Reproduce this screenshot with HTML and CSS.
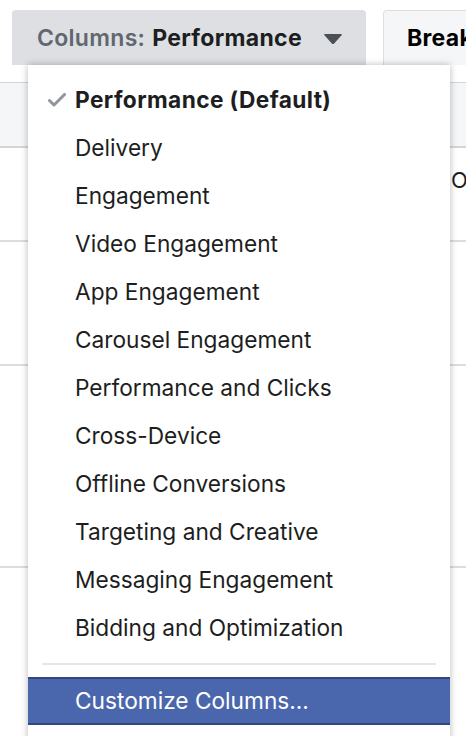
FILE: index.html
```html
<!DOCTYPE html>
<html lang="en">
<head>
    <meta charset="UTF-8">
    <meta name="viewport" content="width=device-width, initial-scale=1.0">
    <link rel="stylesheet" href="styles.css">
    <title>Columns menu</title>
</head>
<body>

<div class="toolbar">
    <button class="columnsButton">
        <span class="label">Columns:</span>
        <span class="value">Performance</span>
        <svg class="caret" width="20" height="12" viewBox="0 0 20 12">
            <path d="M2 1 L18 1 Q19.5 1 18.5 2.3 L11.2 10.4 Q10 11.6 8.8 10.4 L1.5 2.3 Q0.5 1 2 1 Z" fill="#4b4f56"/>
        </svg>
    </button>
    <button class="breakdownButton">Break</button>
</div>

<div class="table">
    <div class="headerRow"></div>
    <div class="row rowOne"><span class="cellText">O</span></div>
    <div class="row rowTwo"></div>
    <div class="row rowThree"></div>
</div>

<!-- Dropdown menu, lies over the table -->
<div class="menu">
    <ul class="menuList">
        <li class="menuItem selected">
            <svg class="check" width="18" height="14" viewBox="0 0 18 14">
                <path d="M1.5 7.5 L6 12 L16.5 1.5" fill="none" stroke="#90949c" stroke-width="3" stroke-linejoin="round" stroke-linecap="round"/>
            </svg>
            Performance (Default)
        </li>
        <li class="menuItem">Delivery</li>
        <li class="menuItem">Engagement</li>
        <li class="menuItem">Video Engagement</li>
        <li class="menuItem">App Engagement</li>
        <li class="menuItem">Carousel Engagement</li>
        <li class="menuItem">Performance and Clicks</li>
        <li class="menuItem">Cross-Device</li>
        <li class="menuItem">Offline Conversions</li>
        <li class="menuItem">Targeting and Creative</li>
        <li class="menuItem">Messaging Engagement</li>
        <li class="menuItem">Bidding and Optimization</li>
    </ul>
    <div class="separator"></div>
    <div class="menuItem highlighted">Customize Columns...</div>
</div>

</body>
</html>
```

FILE: styles.css
```css
body {
    margin: 0;
    background-color: #ffffff;
    font-family: Inter, 'Liberation Sans', sans-serif;
    color: #1c1e21;
    overflow: hidden;
    height: 736px;
    position: relative;
}

.toolbar {
    display: flex;
    gap: 17px;
    padding: 10px 0 0 12px;
    height: 55px;
    white-space: nowrap;
    overflow: hidden;
}

button {
    font-family: inherit;
    font-size: 23px;
    font-weight: 700;
    letter-spacing: 0.3px;
    border: none;
    margin: 0;
    flex-shrink: 0;
}

.columnsButton {
    width: 354px;
    height: 55px;
    background-color: #dddfe2;
    border-radius: 4px 4px 0 0;
    display: flex;
    align-items: center;
    padding: 0 0 0 25px;
}

.columnsButton .label {
    color: #606770;
    font-weight: 600;
    margin-right: 7px;
}

.columnsButton .value {
    color: #1c1e21;
}

.caret {
    margin-left: 21px;
    margin-top: 2px;
}

.breakdownButton {
    width: 83px;
    height: 55px;
    background-color: #f5f6f7;
    border: 1px solid #dddfe2;
    border-right: none;
    border-bottom: none;
    border-radius: 4px 0 0 0;
    text-align: left;
    padding: 0 0 0 23px;
}

.table {
    margin-top: 17px;
}

.headerRow {
    height: 63px;
    background-color: #f5f6f7;
    border-top: 1px solid #d3d5d9;
    border-bottom: 2px solid #d3d5d9;
}

.row {
    border-bottom: 2px solid #dadde1;
}

.rowOne {
    height: 92px;
}

.rowTwo {
    height: 122px;
}

.rowThree {
    height: 200px;
}

.cellText {
    display: block;
    padding: 20px 0 0 451px;
    font-size: 22px;
    line-height: 24px;
    white-space: nowrap;
}

.menu {
    position: absolute;
    left: 28px;
    top: 65px;
    width: 422px;
    height: 700px;
    background-color: #ffffff;
    box-shadow: 0 0 7px rgba(0, 0, 0, 0.28);
}

.menuList {
    list-style: none;
    margin: 0;
    padding: 11px 0 0 0;
}

.menuItem {
    height: 48px;
    line-height: 48px;
    font-size: 22.7px;
    padding-left: 47px;
    position: relative;
    color: #1c1e21;
    white-space: nowrap;
}

.selected {
    font-weight: 700;
    letter-spacing: 0.4px;
}

.check {
    position: absolute;
    left: 20px;
    top: 17px;
}

.separator {
    height: 2px;
    margin: 11px 14px 12px 14px;
    background-color: #e4e6eb;
}

.highlighted {
    background-color: #4a67ad;
    color: #ffffff;
    border-top: 2px solid #30487f;
    border-bottom: 2px solid #30487f;
    height: 44px;
    line-height: 44px;
}
```
